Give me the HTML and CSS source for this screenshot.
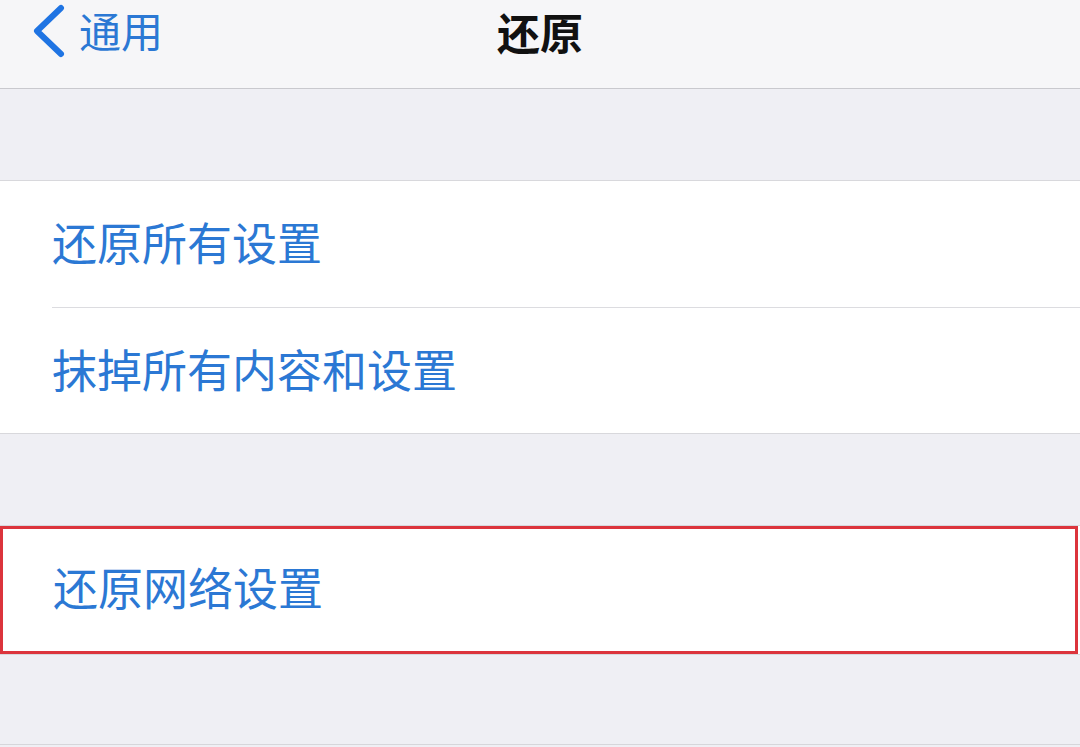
FILE: index.html
```html
<!DOCTYPE html>
<html lang="zh-CN">
<head>
    <meta charset="UTF-8">
    <meta name="viewport" content="width=device-width, initial-scale=1.0">
    <title>还原</title>
    <link rel="stylesheet" href="styles.css">
</head>
<body>
    <nav class="navbar">
        <a href="#" class="back-link">
            <svg class="back-icon" width="34" height="56" viewBox="0 0 34 56">
                <path d="M29 6 L5 29 L29 52" fill="none" stroke="#1f74e3" stroke-width="6" stroke-linecap="round" stroke-linejoin="round"/>
            </svg>
            <span>通用</span>
        </a>
        <h1 class="navbar-title">还原</h1>
        <div></div>
    </nav>

    <div class="gap"></div>

    <ul class="group">
        <li class="row">还原所有设置</li>
        <li class="row">抹掉所有内容和设置</li>
    </ul>

    <div class="gap"></div>

    <ul class="group">
        <!-- highlighted option -->
        <li class="row row-marked">还原网络设置</li>
    </ul>

    <div class="gap gap-last"></div>
</body>
</html>
```

FILE: styles.css
```css
body{
    margin: 0;
    background: #efeff4;
    font-family: "Noto Sans CJK SC", "Noto Sans", sans-serif;
}

.navbar {
    display: grid;
    grid-template-columns: 1fr auto 1fr;
    align-items: start;
    box-sizing: border-box;
    height: 89px;
    background-color: #f6f6f8;
    border-bottom: 1px solid #c9c9ce;
}

.back-link {
    display: flex;
    align-items: center;
    height: 60px;
    padding-left: 32px;
    color: #2b78d4;
    text-decoration: none;
    font-size: 42px;
    line-height: 1;
}

.back-icon {
    margin-right: 13px;
}

.navbar-title {
    margin: 10px 0 0;
    font-size: 43px;
    line-height: 1;
    font-weight: bold;
    color: #111;
}

.gap {
    height: 91px;
}

.gap-last {
    height: 89px;
    border-bottom: 1px solid #d6d6da;
}

.group {
    list-style: none;
    margin: 0;
    padding: 0;
    background-color: #fff;
    border-top: 1px solid #d8d8dc;
    border-bottom: 1px solid #d8d8dc;
}

.row {
    display: flex;
    align-items: center;
    box-sizing: border-box;
    height: 126px;
    padding-bottom: 5px;
    margin-left: 52px;
    font-size: 45px;
    color: #2b78d4;
}

.row + .row {
    border-top: 1px solid #dcdce0;
}

/* The red frame round the option */
.row-marked {
    height: 128px;
    margin: 0 2px 0 0;
    padding-left: 50px;
    padding-bottom: 8px;
    border: 3px solid #dc343c;
}
```
